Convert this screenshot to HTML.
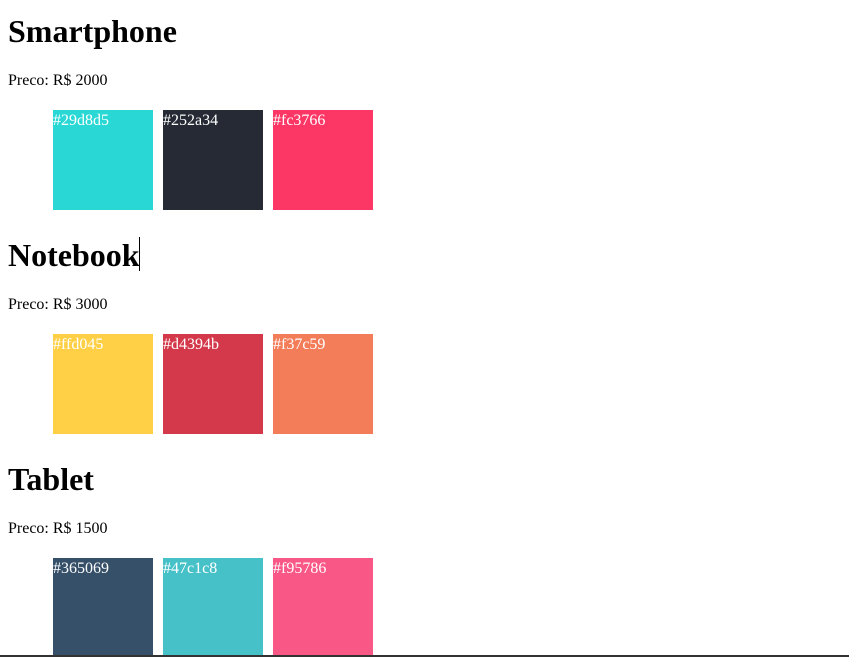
<!DOCTYPE html>
<html><head><meta charset="utf-8"><style>
html,body{margin:0;padding:0;background:#fff;width:849px;height:657px;overflow:hidden;position:relative;font-family:"Liberation Serif",serif;}
h1{position:absolute;left:8px;margin:0;font-size:32px;font-weight:bold;line-height:37px;color:#000;}
p{position:absolute;left:8px;margin:0;font-size:16px;line-height:18px;color:#000;}
.s{position:absolute;width:100px;height:100px;box-sizing:border-box;padding-top:2px;color:#fff;font-size:16px;line-height:18px;}
.cur{position:absolute;left:139px;top:237px;width:1px;height:34px;background:#000;}
.bot{position:absolute;left:0;top:655px;width:849px;height:2px;background:#333;}
</style></head><body>
<h1 style="top:13px">Smartphone</h1>
<p style="top:72px">Preco: R$ 2000</p>
<div class="s" style="left:53px;top:110px;background:#29d8d5">#29d8d5</div>
<div class="s" style="left:163px;top:110px;background:#252a34">#252a34</div>
<div class="s" style="left:273px;top:110px;background:#fc3766">#fc3766</div>
<h1 style="top:237px">Notebook</h1>
<div class="cur"></div>
<p style="top:296px">Preco: R$ 3000</p>
<div class="s" style="left:53px;top:334px;background:#ffd045">#ffd045</div>
<div class="s" style="left:163px;top:334px;background:#d4394b">#d4394b</div>
<div class="s" style="left:273px;top:334px;background:#f37c59">#f37c59</div>
<h1 style="top:461px">Tablet</h1>
<p style="top:520px">Preco: R$ 1500</p>
<div class="s" style="left:53px;top:558px;background:#365069">#365069</div>
<div class="s" style="left:163px;top:558px;background:#47c1c8">#47c1c8</div>
<div class="s" style="left:273px;top:558px;background:#f95786">#f95786</div>
<div class="bot"></div>
</body></html>
